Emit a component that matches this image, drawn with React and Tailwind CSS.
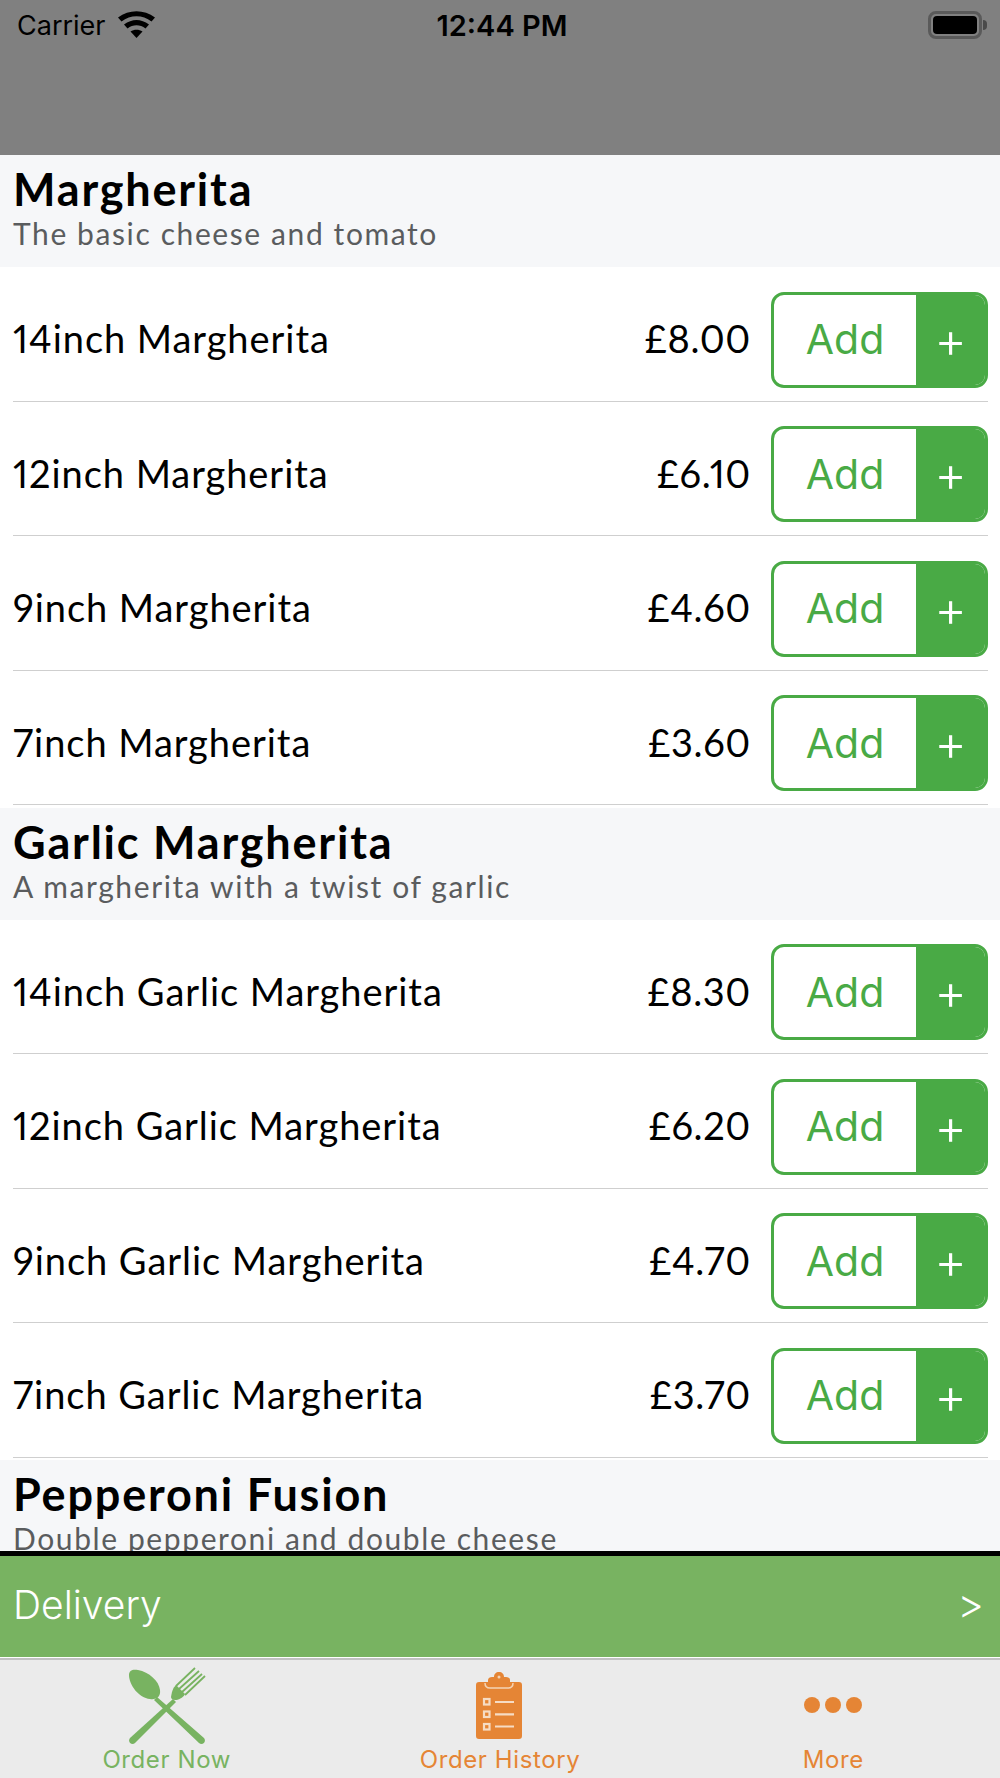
import React from 'react';

const sections = [
  {
    name: 'Margherita',
    blurb: 'The basic cheese and tomato',
    items: [
      ['14inch Margherita', '£8.00'],
      ['12inch Margherita', '£6.10'],
      ['9inch Margherita', '£4.60'],
      ['7inch Margherita', '£3.60'],
    ],
  },
  {
    name: 'Garlic Margherita',
    blurb: 'A margherita with a twist of garlic',
    items: [
      ['14inch Garlic Margherita', '£8.30'],
      ['12inch Garlic Margherita', '£6.20'],
      ['9inch Garlic Margherita', '£4.70'],
      ['7inch Garlic Margherita', '£3.70'],
    ],
  },
  {
    name: 'Pepperoni Fusion',
    blurb: 'Double pepperoni and double cheese',
    items: [],
  },
];

const MenuRow = ({ title, price }) => (
  <div className="ml-[13px] mr-3 h-[134.5px] pt-3 flex items-center border-b-[1.5px] border-[#cfcfcf] shrink-0">
    <span className="flex-1 text-[38px] tracking-[0.95px] mb-[2px] text-black font-['Lato',sans-serif] proportional-nums">{title}</span>
    <span className="mr-[20px] mb-[2px] text-[38px] tracking-[0.65px] text-black font-['Lato',sans-serif] proportional-nums">{price}</span>
    <div className="w-[217px] h-[96px] flex rounded-[13px] border-[3px] border-[#49aa45] overflow-hidden font-['Inter',sans-serif]">
      <div className="w-[142px] flex items-center justify-center text-[#49aa45] text-[41px]">Add</div>
      <div className="flex-1 bg-[#49aa45] flex items-center justify-center text-white text-[50px] leading-none font-light">+</div>
    </div>
  </div>
);

const SectionHeader = ({ name, blurb }) => (
  <div className="h-[112px] bg-[#f6f7f9] pl-[13px] shrink-0 flex flex-col font-['Lato',sans-serif]">
    <div className="text-[45px] leading-[50px] tracking-[1.8px] font-bold text-black pt-[9px] h-[60px]">{name}</div>
    <div className="text-[30px] leading-[36px] tracking-[1.6px] text-[#5a5c5e]">{blurb}</div>
  </div>
);

const OrderIcon = () => (
  <svg width="78" height="78" viewBox="0 0 78 78" className="text-[#78b361]" fill="currentColor">
    <path d="M1 8 C1 3 5 2 10 3 C21 5 31 14 32 23 C33 30 28 33 22 32 C11 31 1 18 1 8 Z" />
    <path d="M29 30 L76 71 C79 75 74 79 71 76 L26 33 Z" />
    <path d="M45 32 L2 71 C-1 75 4 79 7 76 L48 35 Z" />
    <path d="M43 30 C44 24 45 21 48 18 L51 21 L55 25 L57 27 C55 31 50 33 47 33 C45 33 43 32 43 30 Z" />
    <path d="M48 19 L67 1 M51 22 L71 4 M54 25 L74 7 M57 28 L77 9" stroke="currentColor" strokeWidth="1.8" fill="none" />
  </svg>
);

const HistoryIcon = () => (
  <svg width="46" height="67" viewBox="0 0 46 67" className="text-[#e58535] mr-[2px]">
    <path d="M3 10 H12 V8 C12 6 14 5 16 5 H18 C18 2 20 0 23 0 C26 0 28 2 28 5 H30 C32 5 34 6 34 8 V10 H43 C45 10 46 11 46 13 V64 C46 66 45 67 43 67 H3 C1 67 0 66 0 64 V13 C0 11 1 10 3 10 Z" fill="currentColor" />
    <path d="M9 11 C9 14 11 16 14 16 H32 C35 16 37 14 37 11" fill="none" stroke="#f3d3b5" strokeWidth="1.5" />
    <circle cx="23" cy="5" r="1.500" fill="#f3d3b5" />
    <g fill="none" stroke="#f6dcc4" strokeWidth="2.200">
      <rect x="8" y="27" width="5.500" height="5.500" />
      <rect x="8" y="39.500" width="5.500" height="5.500" />
      <rect x="8" y="52" width="5.500" height="5.500" />
      <path d="M19 30 H38 M19 42.300 H38 M19 54.500 H38" />
    </g>
  </svg>
);

const MoreIcon = () => (
  <div className="flex gap-[5px] items-center">
    <div className="w-4 h-4 rounded-full bg-[#e58535]" />
    <div className="w-4 h-4 rounded-full bg-[#e58535]" />
    <div className="w-4 h-4 rounded-full bg-[#e58535]" />
  </div>
);

const TabItem = ({ icon, label, color, iconTop }) => (
  <div className="flex-1 flex flex-col items-center">
    <div className={`h-[87px] flex items-start ${iconTop}`}>{icon}</div>
    <span className={`text-[24px] leading-[26px] tracking-[0.6px] ${color}`}>{label}</span>
  </div>
);

export default function App() {
  return (
    <div className="w-[1000px] h-[1778px] flex flex-col overflow-hidden bg-white font-['Inter',sans-serif]">
      <div className="h-[155px] bg-[#808080] shrink-0 px-[17px] pt-[9px]">
        <div className="h-[32px] flex items-center text-black">
          <div className="flex-1 flex items-center text-[27px]">
            <span className="mt-[3px]">Carrier</span>
            <svg width="37" height="27" viewBox="0 0 37 27" className="ml-[12px] mb-[2px]" fill="currentColor">
              <path d="M18.500 27 L12.500 20.500 C16 18 21 18 24.500 20.500 Z" />
              <path d="M9.500 17.500 C15 13.200 22 13.200 27.500 17.500 L31 13.500 C23 7.500 14 7.500 6 13.500 Z" />
              <path d="M3.500 10.500 C12.500 3.500 24.500 3.500 33.500 10.500 L37 6.500 C26 -2 11 -2 0 6.500 Z" />
            </svg>
          </div>
          <span className="mt-[2px] text-[29px] font-semibold">12:44 PM</span>
          <div className="flex-1 flex items-center justify-end mr-[-4px]">
            <div className="w-[54px] h-[28px] rounded-[8px] border-[3px] border-[#5a5a5a] p-[2px] flex">
              <div className="flex-1 bg-black rounded-[4px]" />
            </div>
            <div className="w-[4px] h-[10px] ml-px bg-[#4a4a4a] rounded-r-[4px]" />
          </div>
        </div>
      </div>

      <div className="flex-1 overflow-hidden flex flex-col">
        {sections.map((section) => (
          <div key={section.name} className="shrink-0 mb-[2.5px]">
            <SectionHeader name={section.name} blurb={section.blurb} />
            {section.items.map(([title, price]) => (
              <MenuRow key={title} title={title} price={price} />
            ))}
          </div>
        ))}
      </div>

      <div className="h-[5px] bg-black shrink-0" />
      <div className="h-[101px] pb-[3px] bg-[#78b361] shrink-0 flex items-center justify-between pl-[13px] pr-4 text-white text-[39px] font-light">
        <span>Delivery</span>
        <span className="text-[41px]">&gt;</span>
      </div>
      <div className="h-px bg-white shrink-0" />
      <div className="h-[120px] shrink-0 bg-[#ebebeb] border-t-2 border-[#c2c2c2] flex">
        <TabItem icon={<OrderIcon />} iconTop="pt-[7px]" label="Order Now" color="text-[#78b361]" />
        <TabItem icon={<HistoryIcon />} iconTop="pt-[12px]" label="Order History" color="text-[#e58535]" />
        <TabItem icon={<MoreIcon />} iconTop="pt-[37px]" label="More" color="text-[#e58535]" />
      </div>
    </div>
  );
}
